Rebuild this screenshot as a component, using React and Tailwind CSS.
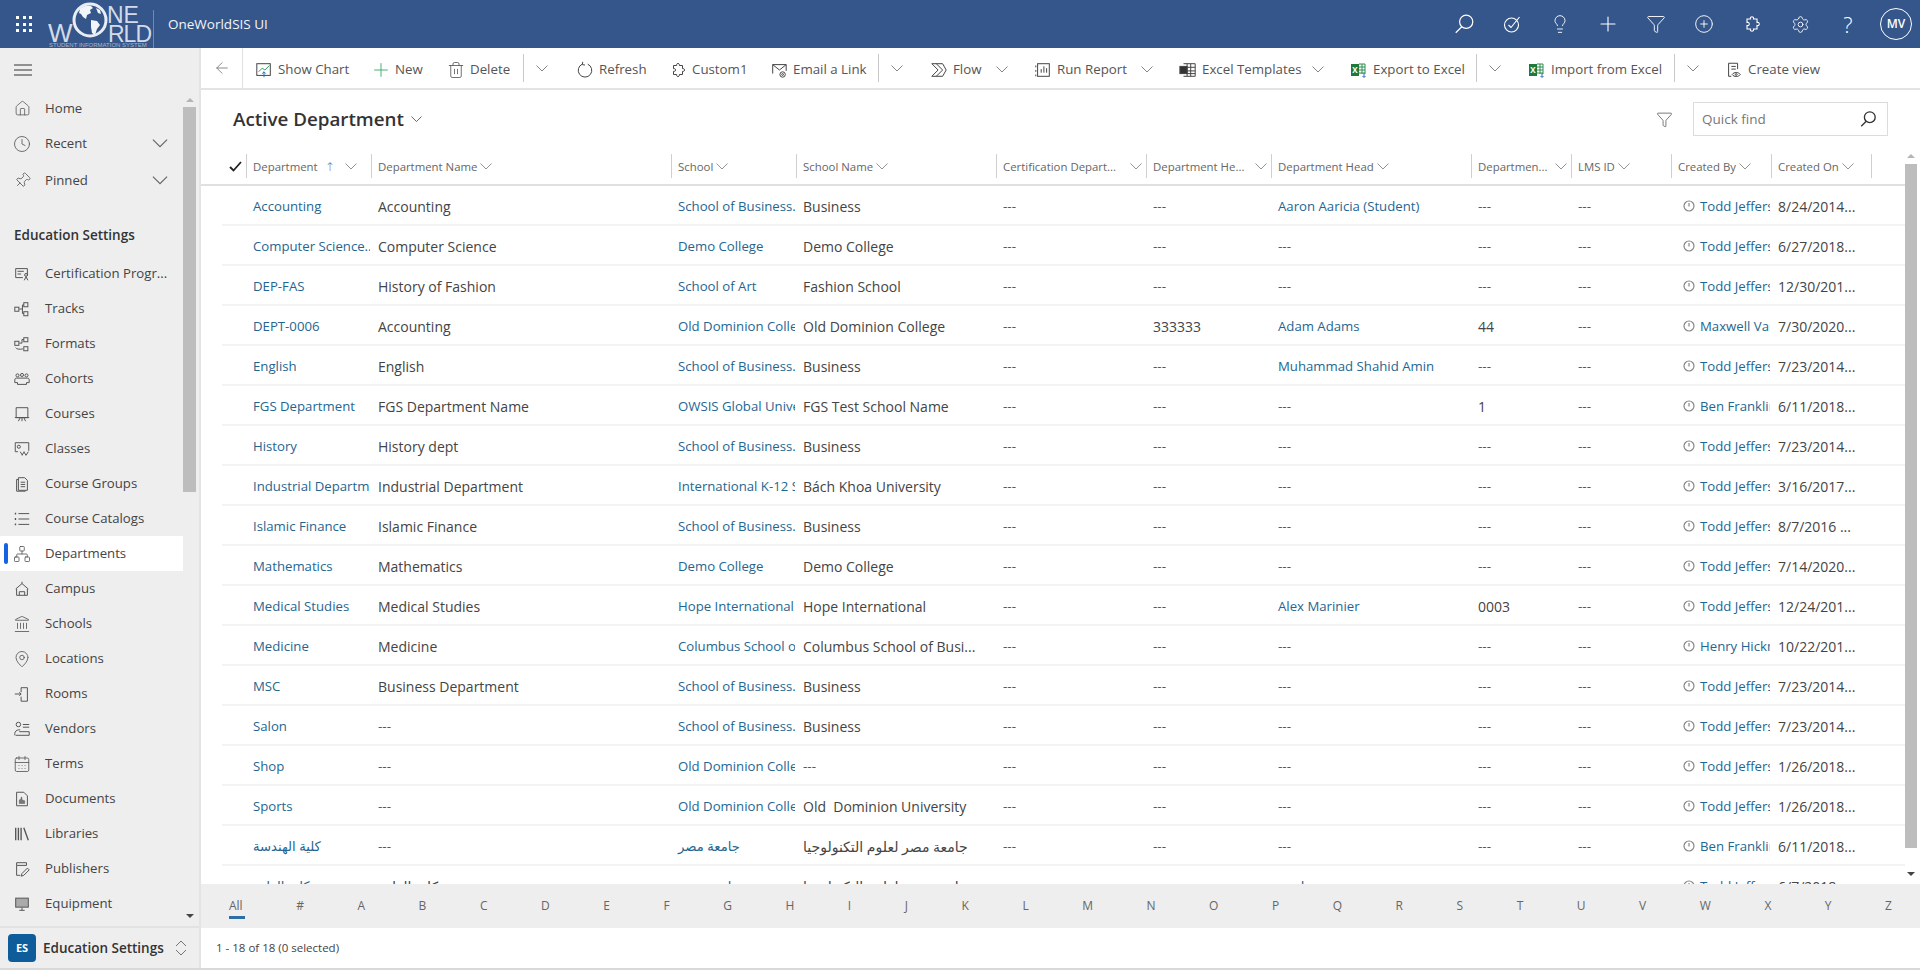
import { Lightbulb, Plus, Filter, CirclePlus, Settings, House, Clock, Pin, Network, Landmark, MapPin, CalendarDays, Trash2, ArrowLeft } from 'lucide-react'

const Chev = ({ w = 12, className = '' }) => (
  <svg width={w} height={w / 2 + 1} viewBox="0 0 12 7" fill="none" stroke="currentColor" strokeWidth="0.9" className={`shrink-0 ${className}`}>
    <path d="M0.5 0.5 6 6 11.5 0.5" />
  </svg>
)

const Ic = ({ size = 18, children, className = '' }) => (
  <svg width={size} height={size} viewBox="0 0 20 20" fill="none" stroke="currentColor" strokeWidth="1.1" className={`shrink-0 ${className}`}>
    {children}
  </svg>
)

const PuzzleIc = ({ size = 18 }) => (
  <Ic size={size}>
    <path d="M5 5h3.500c-1-3 4-3 3 0H15v3.500c3-1 3 4 0 3V15h-3.500c1 3-4 3-3 0H5v-3.500c3 1 3-4 0-3z" />
  </Ic>
)

const SearchIc = ({ size = 20, width = 1.1 }) => (
  <Ic size={size}>
    <circle cx="12" cy="8" r="6" strokeWidth={width} />
    <path d="M8 12.500 2.500 18" strokeWidth={width} />
  </Ic>
)

const Globe = () => (
  <svg width="38" height="42" viewBox="0 0 38 42" className="absolute left-[23px] top-0">
    <circle cx="19" cy="20" r="16" fill="none" stroke="#e8edf4" strokeWidth="3" />
    <path d="M9 9c3-3 7-4 11-3l2 2-3 2 1 3-4 2-1 4-3-2-2-3-2-1zM20 20l6 1 3 4-3 4-2 6-3-2-1-6z M25 8l4 2 1 4-3-1z" fill="#f2f5f9" />
  </svg>
)

const Logo = () => (
  <div className="relative h-12 w-[105px] shrink-0 overflow-hidden text-[#d3dbe8] font-['Liberation_Sans',sans-serif]">
    <Globe />
    <span className="absolute left-[59px] top-[4px] text-[23px] leading-[23px] font-light">NE</span>
    <span className="absolute left-0 top-[20px] text-[26px] leading-[26px] font-light">W</span>
    <span className="absolute left-[60px] top-[22px] text-[23px] leading-[24px] font-light tracking-[-1px]">RLD</span>
    <span className="absolute left-[1px] top-[42px] whitespace-nowrap text-[6px] leading-[6px] text-[#aab6c9]">STUDENT INFORMATION SYSTEM</span>
  </div>
)

const NAV = [
  ['Certification Progr...', <Ic><path d="M16 12V4H3v10h8M5 7h7M5 10h4" /><circle cx="14.500" cy="11" r="1.600" /><path d="M12.500 17l2-4 2 4" /></Ic>],
  ['Tracks', <Ic><rect x="2" y="8" width="4.500" height="4.500" /><rect x="12" y="3" width="4.500" height="4.500" /><rect x="12" y="13" width="4.500" height="4.500" /><path d="M7 10h3.500M10.500 5.500V15M10.500 5.500H12M10.500 15H12" /></Ic>],
  ['Formats', <Ic><rect x="2" y="7" width="4.500" height="4.500" /><rect x="12" y="3" width="4.500" height="4.500" /><rect x="12" y="13" width="4.500" height="4.500" /><path d="M7 9h3M10 5h2M10 5v4M3 14c1 2 4 2 8 1.500" /></Ic>],
  ['Cohorts', <Ic><circle cx="5" cy="6" r="1.700" /><circle cx="10" cy="5.500" r="1.700" /><circle cx="15" cy="6" r="1.700" /><path d="M2 14v-3c0-1.500 1-2 2-2h12c1 0 2 .5 2 2v3h-3v2H5v-2z" /></Ic>],
  ['Courses', <Ic><path d="M3.500 3h13v11h-13zM2 14h16M6 18l2-4M14 18l-2-4M10 14v4" /></Ic>],
  ['Classes', <Ic><path d="M2.500 3h15v9M2.500 3v10h3" /><circle cx="6.500" cy="7.500" r="1.700" /><path d="M8 13l2.500 4M12.500 13L10 17M12 13l2.500 4M17 13l-2.500 4" /></Ic>],
  ['Course Groups', <Ic><path d="M6 3h7l3 3v11H6z M6 5H4v13h10M8.500 8h5M8.500 10.500h5M8.500 13h5" /></Ic>],
  ['Course Catalogs', <Ic><path d="M6 4h12M6 10h12M6 16h12" /><path d="M2 4h1.500M2 10h1.500M2 16h1.500" strokeWidth="2" /></Ic>],
  ['Departments', <Network size={18} strokeWidth={1.1} className="shrink-0" />],
  ['Campus', <Ic><path d="M3 10l7-6 7 6M4 10v7h12v-7M7 17v-4h6v4M10 4V2" /></Ic>],
  ['Schools', <Landmark size={18} strokeWidth={1.1} className="shrink-0" />],
  ['Locations', <MapPin size={18} strokeWidth={1.1} className="shrink-0" />],
  ['Rooms', <Ic><path d="M9 3h7v15H9v-5M9 8V3M2 10h7M7 8l2 2-2 2" /></Ic>],
  ['Vendors', <Ic><circle cx="6" cy="5" r="2.500" /><path d="M2 17v-2c0-2 2-4 4-4h2M11 5h7M11 8h7M7 13h11v4H3" /></Ic>],
  ['Terms', <CalendarDays size={18} strokeWidth={1.1} className="shrink-0" />],
  ['Documents', <Ic><path d="M4 2.500h8l4 4v11H4z" /><path d="M7 15v-4l2-1v-2h1v3l3 1v3z" fill="#777" strokeWidth="0.500" /></Ic>],
  ['Libraries', <Ic><path d="M3 3v14M6 3v14M9 3v14M12 3l5 14" strokeWidth="1.500" /></Ic>],
  ['Publishers', <Ic><path d="M4 3h11v3H4zM4 6v11h4M16 9l-6 6-1 3 3-1 6-6z" /></Ic>],
  ['Equipment', <Ic><rect x="3" y="3.500" width="14" height="10" fill="#666" fillOpacity="0.500" /><path d="M7 17h6M10 14v3" /></Ic>],
]

function NavItem({ label, icon, active, chevron }) {
  return (
    <div className={`relative flex h-[35px] shrink-0 items-center pl-[13px] text-[13.2px] ${active ? 'bg-white' : ''}`}>
      {active && <div className="absolute left-[4px] top-[7px] h-[21px] w-1 rounded-sm bg-[#1464e0]" />}
      <span className="flex w-[18px] justify-center text-[#555]">{icon}</span>
      <span className="ml-[14px] whitespace-nowrap text-[#444]">{label}</span>
      {chevron && <Chev w={16} className="ml-auto mr-[15px] text-[#666]" />}
    </div>
  )
}

function Sidebar() {
  return (
    <aside className="flex h-full w-[201px] shrink-0 flex-col border-r-2 border-[#e4e4e4] bg-[#eeeeee]">
      <div className="flex min-h-0 flex-1">
        <div className="w-[183px] shrink-0 overflow-hidden">
          <div className="flex h-[43px] items-center pl-[14px]">
            <svg width="18" height="12" viewBox="0 0 18 12" stroke="#333" strokeWidth="1.200"><path d="M0 1h18M0 6h18M0 11h18" /></svg>
          </div>
          <NavItem label="Home" icon={<House size={17} strokeWidth={1.1} />} />
          <NavItem label="Recent" icon={<Clock size={18} strokeWidth={1.1} />} chevron />
          <div className="h-[2px]" />
          <NavItem label="Pinned" icon={<Pin size={17} strokeWidth={1.1} className="rotate-45" />} chevron />
          <div className="flex h-[58px] items-end pb-[11px] pl-[14px] text-[13.5px] font-semibold text-[#333]">Education Settings</div>
          {NAV.map(([label, icon]) => (
            <NavItem key={label} label={label} icon={icon} active={label === 'Departments'} />
          ))}
        </div>
        <div className="flex w-4 flex-col items-center pr-[3px] pt-[50px]">
          <div className="h-0 w-0 border-x-[4px] border-b-[4px] border-x-transparent border-b-[#b5b5b5]" />
          <div className="mt-[5px] h-[385px] w-[13px] bg-[#bdbdbd]" />
          <div className="mt-auto mb-[8px] h-0 w-0 border-x-[4px] border-t-[4px] border-x-transparent border-t-[#444]" />
        </div>
      </div>
      <div className="flex h-[42px] shrink-0 items-center border-t-2 border-[#e2e2e2] pl-2">
        <div className="flex h-7 w-7 items-center justify-center rounded-sm bg-[#0f5c9a] text-[11px] font-bold text-white">ES</div>
        <span className="ml-[7px] whitespace-nowrap text-[13.5px] font-semibold text-[#333]">Education Settings</span>
        <svg width="12" height="16" viewBox="0 0 12 16" fill="none" stroke="#666" strokeWidth="0.900" className="ml-[11px]"><path d="M1 6l5-5 5 5M1 10l5 5 5-5" /></svg>
      </div>
    </aside>
  )
}

function TopBar() {
  return (
    <header className="flex h-12 shrink-0 items-center bg-[#35568a] text-white">
      <div className="flex h-12 w-12 shrink-0 items-center justify-center">
        <div className="grid grid-cols-3 gap-[3.500px]">
          {Array.from({ length: 9 }).map((_, i) => <div key={i} className="h-[3px] w-[3px] bg-white" />)}
        </div>
      </div>
      <Logo />
      <div className="h-[38px] w-px self-end bg-[#6f89b0]" />
      <span className="ml-[14px] text-[13.5px] text-[#f3f5f9]">OneWorldSIS UI</span>
      <div className="ml-auto flex items-center">
        <span className="flex w-12 justify-center"><SearchIc size={22} /></span>
        <span className="flex w-12 justify-center">
          <Ic size={20}><circle cx="9.500" cy="11" r="7" /><path d="M6.500 11l2.500 2.500L17.500 3" /></Ic>
        </span>
        <span className="flex w-12 justify-center"><Lightbulb size={20} strokeWidth={1.1} /></span>
        <span className="flex w-12 justify-center"><Plus size={24} strokeWidth={1.1} /></span>
        <span className="flex w-12 justify-center"><Filter size={20} strokeWidth={1.1} /></span>
        <span className="flex w-12 justify-center"><CirclePlus size={20} strokeWidth={1.1} /></span>
        <span className="flex w-12 justify-center"><PuzzleIc size={20} /></span>
        <span className="flex w-12 justify-center"><Settings size={19} strokeWidth={1.1} /></span>
        <span className="flex w-12 justify-center text-[22px] font-light leading-none">?</span>
        <span className="flex w-12 justify-center">
          <span className="flex h-8 w-8 items-center justify-center rounded-full border border-white text-[12px] font-semibold">MV</span>
        </span>
      </div>
    </header>
  )
}

const XlsIcon = () => (
  <svg width="18" height="18" viewBox="0 0 18 18" className="shrink-0">
    <rect x="1" y="3" width="8" height="12" fill="#1e7a3c" />
    <text x="5" y="12" textAnchor="middle" fontSize="8" fontWeight="700" fill="#fff">X</text>
    <path d="M9 3h6v10M9 6h6M9 9h6M9 12h6M12 3v10" fill="none" stroke="#2e8b4e" strokeWidth="1" />
    <path d="M14 12v4M12.500 15l1.500 1.500 1.500-1.500" fill="none" stroke="#2b6cb8" strokeWidth="1" />
  </svg>
)

function Btn({ icon, label, chevron, width }) {
  return (
    <div className={`flex h-full shrink-0 items-center pt-[3px] ${width}`}>
      <span className="flex w-[18px] shrink-0 justify-center text-[#444]">{icon}</span>
      <span className="ml-[5px] whitespace-nowrap text-[13.3px] text-[#555]">{label}</span>
      {chevron && <Chev className="ml-auto mr-[26px] text-[#777]" />}
    </div>
  )
}

const Split = ({ width }) => (
  <div className={`flex h-full shrink-0 items-center ${width}`}>
    <div className="h-[28px] w-px bg-[#c8c8c8]" />
    <Chev className="ml-[12px] text-[#777]" />
  </div>
)

function Toolbar() {
  return (
    <div className="flex h-[42px] shrink-0 items-center border-b-2 border-[#e3e3e3] bg-white">
      <div className="flex h-full w-[42px] shrink-0 items-center justify-center border-r border-[#e0e0e0]">
        <ArrowLeft size={18} strokeWidth={1} className="text-[#666]" />
      </div>
      <div className="w-[12px] shrink-0" />
      <Btn width="w-[117px]" label="Show Chart" icon={
        <Ic size={18}><rect x="2" y="3" width="15" height="13" /><path d="M4 12l4-4 3 2 5-5" stroke="#2e9e5f" /><path d="M10 18v-6M8 14l2-2 2 2" stroke="#2b6cb8" /></Ic>
      } />
      <Btn width="w-[75px]" label="New" icon={<Plus size={22} strokeWidth={1} className="shrink-0 text-[#3aa66a]" />} />
      <Btn width="w-[76px]" label="Delete" icon={<Trash2 size={18} strokeWidth={1} />} />
      <Split width="w-[53px]" />
      <Btn width="w-[93px]" label="Refresh" icon={
        <Ic size={18}><path d="M7 3.500A7.500 7.500 0 1 0 13 3.500M7.500 1l-.5 3 3 .5" /></Ic>
      } />
      <Btn width="w-[101px]" label="Custom1" icon={<PuzzleIc size={18} />} />
      <Btn width="w-[108px]" label="Email a Link" icon={
        <Ic size={18}><path d="M3 14V4h15v7M3 4l7.500 6L18 4" /><circle cx="14" cy="15" r="3" /><circle cx="14" cy="15" r="1" /></Ic>
      } />
      <Split width="w-[52px]" />
      <Btn width="w-[104px]" label="Flow" chevron icon={
        <Ic size={18}><path d="M2 3h12l4 7-4 7H2l7-7zM7 3l7 7-7 7" /></Ic>
      } />
      <Btn width="w-[145px]" label="Run Report" chevron icon={
        <Ic size={18}><rect x="4" y="3" width="13" height="14" /><path d="M8 13V9M11 13V6M14 13V8M2 5v2M2 10v2M2 15v2" /></Ic>
      } />
      <Btn width="w-[171px]" label="Excel Templates" chevron icon={
        <Ic size={18}><path d="M5 3h13v14H5M9 3v14M13 3v14M9 7h9M9 11h9M9 14h9" /><rect x="1" y="6" width="8" height="8" fill="#333" /></Ic>
      } />
      <Btn width="w-[126px]" label="Export to Excel" icon={<XlsIcon />} />
      <Split width="w-[52px]" />
      <Btn width="w-[146px]" label="Import from Excel" icon={<XlsIcon />} />
      <Split width="w-[51px]" />
      <Btn width="w-[110px]" label="Create view" icon={
        <Ic size={18}><path d="M4 17V2.500h10V9M7 6h5M7 9h5M4 17h3" /><path d="M8 15c2-3 7-3 9 0-2 3-7 3-9 0z" /><circle cx="12.500" cy="15" r="1" /></Ic>
      } />
    </div>
  )
}

const COLS = 'grid grid-cols-[23px_125px_300px_125px_200px_150px_125px_200px_100px_100px_100px_100px]'

const HEADS = [
  ['Department', 'w-[125px]', 'sort'], ['Department Name', 'w-[300px]'], ['School', 'w-[125px]'], ['School Name', 'w-[200px]'],
  ['Certification Depart...', 'w-[150px]', 'end'], ['Department He...', 'w-[125px]', 'end'], ['Department Head', 'w-[200px]'],
  ['Departmen...', 'w-[100px]', 'end'], ['LMS ID', 'w-[100px]'], ['Created By', 'w-[100px]'], ['Created On', 'w-[100px]'],
]

function HeaderRow() {
  return (
    <div className="flex h-[38px] shrink-0 border-b-2 border-[#e0e0e0]">
      <div className="flex w-[45px] shrink-0 items-center justify-end pr-[4px]">
        <svg width="13" height="11" viewBox="0 0 13 11" fill="none" stroke="#222" strokeWidth="1.800"><path d="M1 6l3.500 3.500L12 1" /></svg>
      </div>
      {HEADS.map(([name, width, mode]) => (
        <div key={name} className={`flex shrink-0 items-center ${width}`}>
          <div className="flex h-[24px] w-full items-center border-l border-[#d0d0d0] pl-[6px] pt-px text-[11.4px] text-[#666]">
            <span className="whitespace-nowrap">{name}</span>
            {mode === 'sort' && <span className="ml-[7px] text-[12px] font-light text-[#777]">↑</span>}
            <Chev className={`text-[#888] ${mode === 'end' ? 'ml-auto mr-[4px]' : mode === 'sort' ? 'ml-[10px]' : 'ml-[3px]'}`} />
          </div>
        </div>
      ))}
      <div className="h-[24px] w-px self-center bg-[#d0d0d0]" />
    </div>
  )
}

const D = '---'
const T = 'Todd Jeffers'
const B = 'School of Business...'
const ROWS = [
  ['Accounting', 'Accounting', B, 'Business', D, D, 'Aaron Aaricia (Student)', D, D, T, '8/24/2014...'],
  ['Computer Science...', 'Computer Science', 'Demo College', 'Demo College', D, D, D, D, D, T, '6/27/2018...'],
  ['DEP-FAS', 'History of Fashion', 'School of Art', 'Fashion School', D, D, D, D, D, T, '12/30/201...'],
  ['DEPT-0006', 'Accounting', 'Old Dominion College', 'Old Dominion College', D, '333333', 'Adam Adams', '44', D, 'Maxwell Van Der', '7/30/2020...'],
  ['English', 'English', B, 'Business', D, D, 'Muhammad Shahid Amin', D, D, T, '7/23/2014...'],
  ['FGS Department', 'FGS Department Name', 'OWSIS Global University', 'FGS Test School Name', D, D, D, '1', D, 'Ben Franklin', '6/11/2018...'],
  ['History', 'History dept', B, 'Business', D, D, D, D, D, T, '7/23/2014...'],
  ['Industrial Department', 'Industrial Department', 'International K-12 School', 'Bách Khoa University', D, D, D, D, D, T, '3/16/2017...'],
  ['Islamic Finance', 'Islamic Finance', B, 'Business', D, D, D, D, D, T, '8/7/2016 ...'],
  ['Mathematics', 'Mathematics', 'Demo College', 'Demo College', D, D, D, D, D, T, '7/14/2020...'],
  ['Medical Studies', 'Medical Studies', 'Hope International...', 'Hope International', D, D, 'Alex Marinier', '0003', D, T, '12/24/201...'],
  ['Medicine', 'Medicine', 'Columbus School of Business', 'Columbus School of Busi...', D, D, D, D, D, 'Henry Hickman', '10/22/201...'],
  ['MSC', 'Business Department', B, 'Business', D, D, D, D, D, T, '7/23/2014...'],
  ['Salon', D, B, 'Business', D, D, D, D, D, T, '7/23/2014...'],
  ['Shop', D, 'Old Dominion College', D, D, D, D, D, D, T, '1/26/2018...'],
  ['Sports', D, 'Old Dominion College', 'Old  Dominion University', D, D, D, D, D, T, '1/26/2018...'],
  ['كلية الهندسة', D, 'جامعة مصر', 'جامعة مصر لعلوم التكنولوجيا', D, D, D, D, D, 'Ben Franklin', '6/11/2018...'],
  ['كلية الطب', 'كلية الطب', 'جامعة مصر', 'جامعة مصر لعلوم التكنولوجيا', D, D, 'محمد احمد', D, D, T, '6/7/2018...'],
]

const LINK = 'pt-px text-[13.2px] text-[#1f6691]'
const PLAIN = 'text-[14px] text-[#444]'
const DASH = 'text-[13.5px] text-[#555]'

function Cell({ value, link }) {
  if (value === D) return <div className={`overflow-hidden whitespace-pre pl-2 ${DASH}`}>{value}</div>
  return <div className={`overflow-hidden whitespace-pre pl-2 ${link ? LINK : PLAIN}`}>{value}</div>
}

function Row({ row }) {
  const [dept, name, school, schoolName, cert, code, head, num, lms, by, on] = row
  return (
    <div className={`ml-[21px] h-10 shrink-0 items-center border-b-2 border-[#f3f3f3] pt-[2px] ${COLS}`}>
      <div />
      <Cell value={dept} link />
      <Cell value={name} />
      <Cell value={school} link />
      <Cell value={schoolName} />
      <Cell value={cert} />
      <Cell value={code} />
      <Cell value={head} link />
      <Cell value={num} />
      <Cell value={lms} />
      <div className="flex items-center overflow-hidden whitespace-nowrap pl-[13px]">
        <svg width="12" height="12" viewBox="0 0 12 12" fill="none" stroke="#888" strokeWidth="1.200" className="shrink-0">
          <circle cx="6" cy="6" r="5" /><path d="M6 3v3.500" />
        </svg>
        <span className={`ml-[5px] ${LINK}`}>{by}</span>
      </div>
      <Cell value={on} />
    </div>
  )
}

const LETTERS = ['All', '#', ...'ABCDEFGHIJKLMNOPQRSTUVWXYZ']

function JumpBar() {
  return (
    <div className="flex h-[44px] shrink-0 items-center justify-between bg-[#eeeeee] pl-[28px] pr-[28px] text-[12px] text-[#666]">
      {LETTERS.map(l => (
        <div key={l} className="relative">
          <span>{l}</span>
          {l === 'All' && <div className="absolute left-0 top-[19px] h-[3px] w-[16px] bg-[#2f6ea5]" />}
        </div>
      ))}
    </div>
  )
}

function Main() {
  return (
    <main className="flex h-full min-w-0 flex-1 flex-col bg-white">
      <Toolbar />
      <div className="flex min-h-0 flex-1">
        <div className="flex min-w-0 flex-1 flex-col">
          <div className="flex h-[58px] shrink-0 items-center pl-[32px] pr-[17px]">
            <span className="text-[18.8px] font-semibold text-[#333]">Active Department</span>
            <Chev w={11} className="ml-[7px] text-[#444]" />
            <Filter size={17} strokeWidth={1} className="ml-auto mr-[20px] text-[#444]" />
            <div className="flex h-[34px] w-[195px] items-center border border-[#dcdcdc] pl-2 pr-[10px]">
              <span className="text-[13.5px] text-[#777]">Quick find</span>
              <span className="ml-auto text-[#333]"><SearchIc size={18} width={1.5} /></span>
            </div>
          </div>
          <HeaderRow />
          <div className="flex min-h-0 flex-1 flex-col overflow-hidden">
            {ROWS.map((r, i) => <Row key={i} row={r} />)}
          </div>
        </div>
        <div className="flex w-[15px] shrink-0 flex-col items-center pr-[3px] pt-[64px]">
          <div className="h-0 w-0 border-x-[4px] border-b-[4px] border-x-transparent border-b-[#b5b5b5]" />
          <div className="mt-[6px] h-[684px] w-[12px] bg-[#bdbdbd]" />
          <div className="mt-[24px] h-0 w-0 border-x-[4px] border-t-[4px] border-x-transparent border-t-[#444]" />
        </div>
      </div>
      <JumpBar />
      <div className="flex h-[40px] shrink-0 items-center pl-[15px] text-[11.5px] text-[#444]">1 - 18 of 18 (0 selected)</div>
    </main>
  )
}

export default function App() {
  return (
    <div className="flex h-[970px] w-[1920px] flex-col overflow-hidden bg-white font-['Open_Sans','DejaVu_Sans',sans-serif]">
      <TopBar />
      <div className="flex min-h-0 flex-1">
        <Sidebar />
        <Main />
      </div>
      <div className="h-[2px] shrink-0 bg-[#d8d8d8]" />
    </div>
  )
}
